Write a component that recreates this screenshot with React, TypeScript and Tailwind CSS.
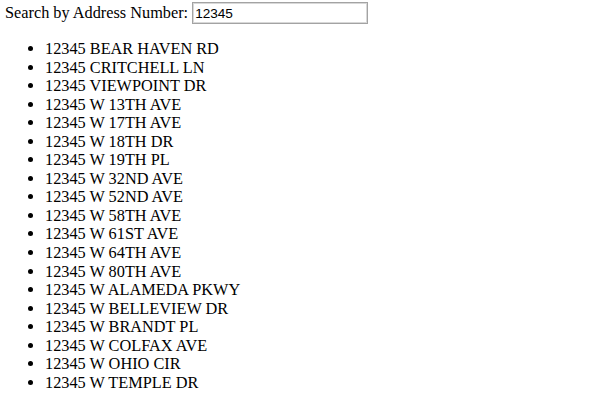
const addresses = [
  "12345 BEAR HAVEN RD",
  "12345 CRITCHELL LN",
  "12345 VIEWPOINT DR",
  "12345 W 13TH AVE",
  "12345 W 17TH AVE",
  "12345 W 18TH DR",
  "12345 W 19TH PL",
  "12345 W 32ND AVE",
  "12345 W 52ND AVE",
  "12345 W 58TH AVE",
  "12345 W 61ST AVE",
  "12345 W 64TH AVE",
  "12345 W 80TH AVE",
  "12345 W ALAMEDA PKWY",
  "12345 W BELLEVIEW DR",
  "12345 W BRANDT PL",
  "12345 W COLFAX AVE",
  "12345 W OHIO CIR",
  "12345 W TEMPLE DR",
];

export default function App() {
  return (
    <div className="w-[600px] h-[400px] bg-white text-black text-[16.3px] leading-[18.55px] px-[5px] pt-[2px] overflow-hidden font-['Liberation_Serif',serif]">
      <label className="flex items-center gap-[4px]">
        <span>Search by Address Number:</span>
        <input
          type="text"
          defaultValue="12345"
          className="w-[176px] h-[22px] px-[2px] border border-[#a3a3a3] shadow-[inset_0_0_0_1px_#d8d8d8] outline-none text-[13.6px] font-['Liberation_Sans',sans-serif] text-black bg-white"
        />
      </label>

      <ul className="list-disc pl-[40px] mt-[16px]">
        {addresses.map((a) => (
          <li key={a}>{a}</li>
        ))}
      </ul>
    </div>
  );
}
